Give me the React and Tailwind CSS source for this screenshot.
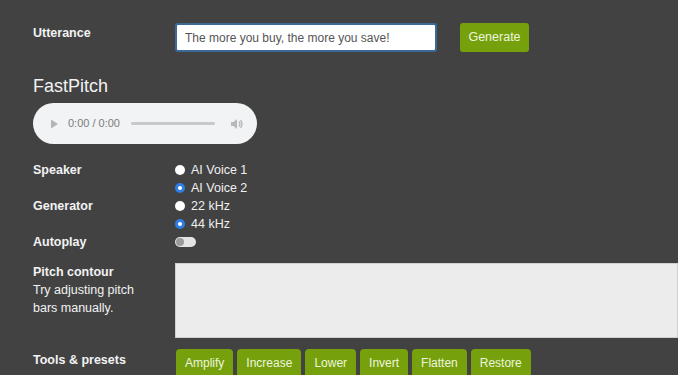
import React, { useState } from "react";

const tools = ["Amplify", "Increase", "Lower", "Invert", "Flatten", "Restore"];

function Radio({ checked, label, onClick }) {
  return (
    <div className="flex h-[18px] items-center gap-[6px] cursor-pointer" onClick={onClick}>
      {checked ? (
        <span className="flex h-[10px] w-[10px] items-center justify-center rounded-full bg-[#2f7ee6]">
          <span className="h-[4px] w-[4px] rounded-full bg-white" />
        </span>
      ) : (
        <span className="h-[10px] w-[10px] rounded-full bg-white" />
      )}
      <span className="text-[12.5px] text-[#f0f0f0]">{label}</span>
    </div>
  );
}

export default function App() {
  const [text, setText] = useState("The more you buy, the more you save!");
  const [speaker, setSpeaker] = useState(2);
  const [rate, setRate] = useState(44);
  const [autoplay, setAutoplay] = useState(false);

  return (
    <div className="min-h-screen overflow-hidden bg-[#424242] pl-[33px] pt-[23px] font-['Liberation_Sans',Arial,sans-serif] text-white">
      <div className="grid grid-cols-[142px_1fr]">
        <div className="pt-[1px] text-[12.5px] font-bold text-[#f2f2f2]">Utterance</div>
        <div className="flex items-center gap-[23px]">
          <input
            value={text}
            onChange={(e) => setText(e.target.value)}
            className="h-[29px] w-[262px] rounded-[3px] border-2 border-[#3b6a96] bg-white px-[8px] text-[12px] text-[#555] outline-none"
          />
          <button className="h-[29px] w-[69px] rounded-[3px] bg-[#76a10d] text-[12.5px] text-[#eef5de]">Generate</button>
        </div>
      </div>

      <h2 className="mt-[23px] text-[18px] leading-[22px] text-[#f2f2f2]">FastPitch</h2>

      <div className="mt-[6px] flex h-[41px] w-[224px] items-center rounded-full bg-[#f1f3f4] pl-[17px] pr-[13px]">
        <svg width="9" height="10" viewBox="0 0 9 10" className="text-[#b5b5b5]">
          <path d="M1 0.5 L8 5 L1 9.5 Z" fill="currentColor" />
        </svg>
        <span className="ml-[9px] text-[11px] text-[#7d7d7d]">0:00 / 0:00</span>
        <span className="ml-[11px] h-[3px] w-[84px] rounded-full bg-[#c8c8c8]" />
        <svg width="14" height="12" viewBox="0 0 14 12" className="ml-auto text-[#b8b8b8]">
          <path d="M1 4 H3.5 L7 1 V11 L3.5 8 H1 Z" fill="currentColor" />
          <path d="M9 3.5 Q11 6 9 8.5" stroke="currentColor" strokeWidth="1.3" fill="none" />
          <path d="M10.5 2 Q13.5 6 10.5 10" stroke="currentColor" strokeWidth="1.3" fill="none" />
        </svg>
      </div>

      <div className="mt-[17px] grid grid-cols-[142px_1fr]">
        <div className="text-[12.5px] font-bold leading-[18px] text-[#f2f2f2]">Speaker</div>
        <div>
          <Radio checked={speaker === 1} label="AI Voice 1" onClick={() => setSpeaker(1)} />
          <Radio checked={speaker === 2} label="AI Voice 2" onClick={() => setSpeaker(2)} />
        </div>
        <div className="text-[12.5px] font-bold leading-[18px] text-[#f2f2f2]">Generator</div>
        <div>
          <Radio checked={rate === 22} label="22 kHz" onClick={() => setRate(22)} />
          <Radio checked={rate === 44} label="44 kHz" onClick={() => setRate(44)} />
        </div>
        <div className="text-[12.5px] font-bold leading-[18px] text-[#f2f2f2]">Autoplay</div>
        <div className="flex h-[18px] items-center">
          <button
            onClick={() => setAutoplay(!autoplay)}
            className="flex h-[10px] w-[21px] items-center rounded-full bg-[#e4e4e4] px-[1px]"
          >
            <span className={autoplay ? "ml-auto h-[8px] w-[8px] rounded-full bg-[#76a10d]" : "h-[8px] w-[8px] rounded-full bg-[#9a9a9a]"} />
          </button>
        </div>

        <div className="mt-[12px] text-[12.5px] leading-[18px] text-[#f2f2f2]">
          <div className="font-bold">Pitch contour</div>
          <div>Try adjusting pitch</div>
          <div>bars manually.</div>
        </div>
        <div className="mt-[12px] h-[75px] border border-[#cfcfcf] bg-[#ececec]" />

        <div className="mt-[11px] pt-[2px] text-[12.5px] font-bold leading-[18px] text-[#f2f2f2]">Tools &amp; presets</div>
        <div className="mt-[11px] flex gap-[4px] pl-[1px]">
          {tools.map((t) => (
            <button key={t} className="h-[28px] rounded-t-[4px] bg-[#76a10d] px-[9px] text-[12px] text-[#eef5de]">
              {t}
            </button>
          ))}
        </div>
      </div>
    </div>
  );
}
